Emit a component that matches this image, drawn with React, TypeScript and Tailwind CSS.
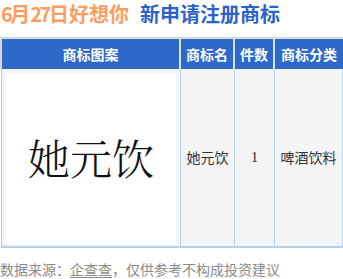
const cjk = { fontFamily: '"Noto Sans CJK SC", "Noto Sans", sans-serif' };

export default function App() {
  return (
    <div className="w-[343px] h-[279px] bg-white overflow-hidden" style={cjk}>
      <div className="h-[28px] flex items-center pl-px text-[20px] font-bold leading-[28px] whitespace-nowrap">
        <span className="text-[#fd9d5e]">
          <span className="tracking-[-2.5px]">6</span>月<span className="tracking-[-2.5px]">27</span>日好想你
        </span>
        <span className="ml-[11px] text-[#2c63c8]">新申请注册商标</span>
      </div>

      <div className="mt-[9px]">
        {/* header */}
        <div className="flex h-[32px] border-t-2 border-l-2 border-[#d9d9d9] bg-[#2d69c9] text-white text-[14px] font-bold">
          <div className="w-[177px] flex items-center justify-center">商标图案</div>
          <div className="w-[2px] bg-[#d6e2f2]" />
          <div className="w-[52px] flex items-center justify-center">商标名</div>
          <div className="w-[2px] bg-[#d6e2f2]" />
          <div className="w-[38px] flex items-center justify-center">件数</div>
          <div className="w-[2px] bg-[#d6e2f2]" />
          <div className="flex-1 flex items-center justify-center">商标分类</div>
        </div>

        {/* body */}
        <div className="ml-px w-[342px] flex h-[179px] border-l border-r border-b-2 border-[#b3d1ec] bg-[#f4f4f4] text-[14px] text-[#333]">
          <div className="w-[179px] pt-1 px-1 pb-0.5 border-r border-[#b3d1ec]">
            <div
              className="h-full bg-white flex items-center justify-center text-[42px] text-[#111] leading-none pb-1"
              style={{ fontFamily: '"Noto Serif CJK SC", "Noto Sans CJK SC", serif', fontWeight: 300 }}
            >
              她元饮
            </div>
          </div>
          <div className="w-[54px] border-r border-[#b3d1ec] flex items-center justify-center">她元饮</div>
          <div
            className="w-[40px] border-r border-[#b3d1ec] flex items-center justify-center text-[15px]"
            style={{ fontFamily: '"Liberation Serif", serif' }}
          >
            1
          </div>
          <div className="flex-1 flex items-center justify-center">啤酒饮料</div>
        </div>
      </div>

      <div className="mt-[11px] text-[14px] leading-[20px] text-[#8a8a8a] whitespace-nowrap">
        数据来源：<span className="underline underline-offset-2">企查查</span>，仅供参考不构成投资建议
      </div>
    </div>
  );
}
